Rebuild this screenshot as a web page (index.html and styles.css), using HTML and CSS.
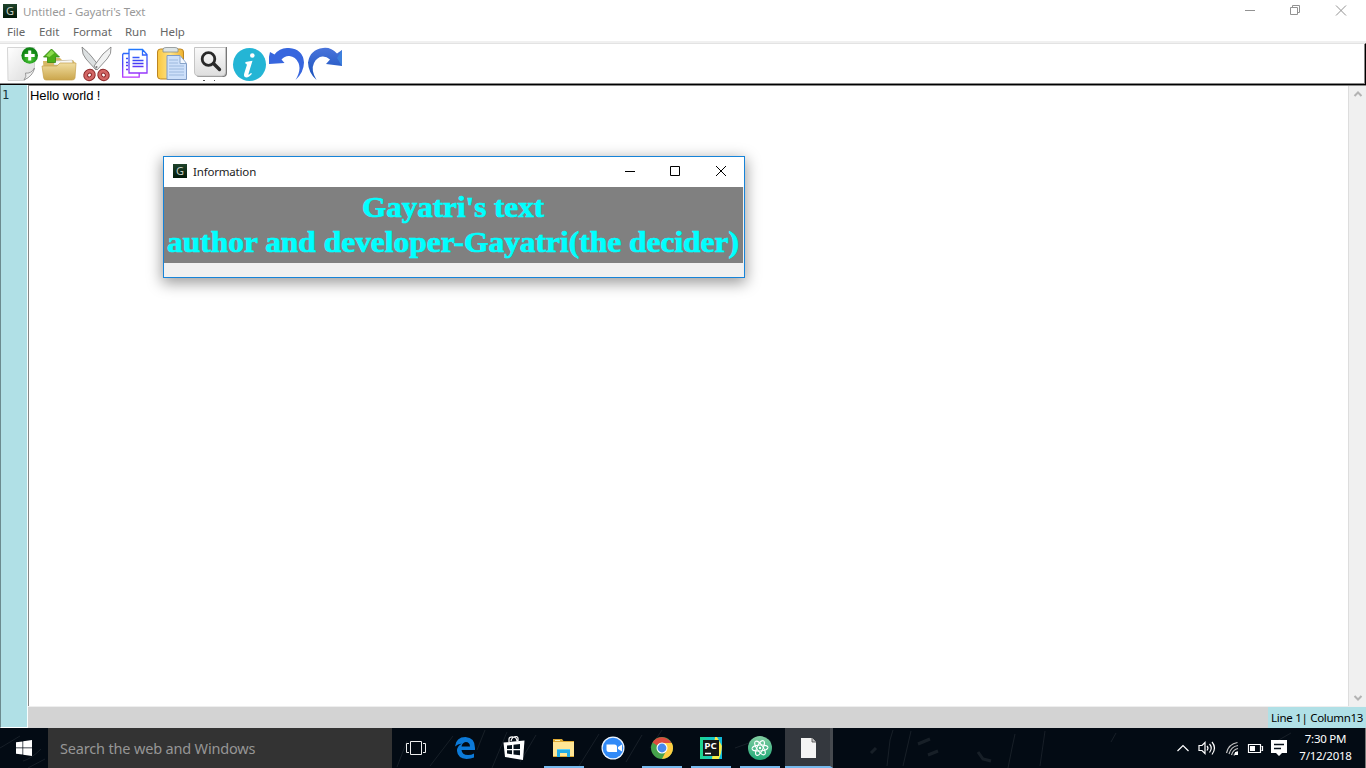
FILE: index.html
```html
<!DOCTYPE html>
<html lang="en">
<head>
<meta charset="utf-8">
<title>Untitled - Gayatri's Text</title>
<link rel="stylesheet" href="styles.css">
</head>
<body>
<div class="screen">
  <header class="titlebar">
    <span class="applogo">G</span>
    <span class="title">Untitled - Gayatri's Text</span>
    <svg class="controls" width="126" height="23" viewBox="1240 0 126 23" fill="none" stroke="#929292"><path d="M1245 10.5h10M1290.5 7.500h7v7h-7zM1292.500 7V5.500h7v7H1298M1336 5.500l10 10M1346 5.500l-10 10"/></svg>
  </header>
  <nav class="menu"><span class="file">File</span><span class="edit">Edit</span><span class="format">Format</span><span class="run">Run</span><span class="help">Help</span></nav>
  <div class="toolbar">
    <svg viewBox="3 43 38 40"><defs><linearGradient id="page" x1="0" y1="0" x2="1" y2="1"><stop stop-color="#fff"/><stop offset="1" stop-color="#dadada"/></linearGradient><radialGradient id="green" cx=".5" cy=".7"><stop stop-color="#55d238"/><stop offset="1" stop-color="#118516"/></radialGradient></defs><path d="M7.500 47.500h27V69Q30 77 24 80.500H8z" fill="url(#page)" stroke="#d5d5d5"/><path d="M24 80q3-4 1.500-7Q31 74 34.500 68 33 76 24 80z" fill="#eee" stroke="#888" stroke-width=".8"/><circle cx="29.700" cy="55.500" r="8.300" fill="url(#green)"/><path d="M29.700 50.500v10M24.700 55.500h10" stroke="#fff" stroke-width="3"/></svg>
    <svg viewBox="41 43 38 40"><defs><linearGradient id="folder" x1="0" y1="0" x2="0" y2="1"><stop stop-color="#f0dda0"/><stop offset="1" stop-color="#cba64c"/></linearGradient></defs><path d="M43 61h4l2-3h11l2 2h11l2 3v15H44z" fill="#d7b866"/><path d="M54 61l18-1 1 5H54z" fill="#f8f8f6" stroke="#bbb" stroke-width=".5"/><path d="M42 66h15l3-3h16l-1 15q-.3 2-3 2H46q-2 0-2.300-2z" fill="url(#folder)" stroke="#c5a24d" stroke-width=".7"/><path d="M51.500 49l8 8h-4v5.500h-8V57h-4z" fill="#4cae18" stroke="#338710" stroke-width=".8"/><path d="M46 56l5.500-6 3 3-5 4z" fill="#8bda4c"/></svg>
    <svg viewBox="79 43 38 40"><path d="M82 47q0 8 4 12l10 11 3-4-7-9q-3-4-10-10z" fill="#dce0e1" stroke="#777" stroke-width=".8"/><path d="M111 47q1 7-4 12L97 70l-3-4 9-12z" fill="#f1f2f2" stroke="#777" stroke-width=".8"/><g fill="none" stroke="#8d2b2c" stroke-width="4.800"><ellipse cx="89.500" cy="75" rx="4" ry="3.600" transform="rotate(-40 89.500 75)"/><ellipse cx="103.500" cy="75" rx="4" ry="3.600" transform="rotate(40 103.500 75)"/></g><g fill="none" stroke="#d26665" stroke-width="2.800"><ellipse cx="89.500" cy="75" rx="4" ry="3.600" transform="rotate(-40 89.500 75)"/><ellipse cx="103.500" cy="75" rx="4" ry="3.600" transform="rotate(40 103.500 75)"/></g><circle cx="96.500" cy="67" r="1" fill="#777"/></svg>
    <svg viewBox="117 43 38 40"><defs><linearGradient id="copy" gradientUnits="userSpaceOnUse" x1="0" y1="49" x2="0" y2="79"><stop stop-color="#217bff"/><stop offset=".5" stop-color="#493bf5"/><stop offset="1" stop-color="#ca35ff"/></linearGradient></defs><g fill="none" stroke="url(#copy)" stroke-width="1.300"><path d="M129 53.500h-5.500l-.8 1v22.700h16.500V73M129 49.500h13.500l4.500 5V73h-18zM142.500 50v5h4.500M132.500 57.500h7M132.500 60.500h11M132.500 63.500h11M132.500 66.500h11M126 58.500h2M126 62.500h2M126 65.500h2M126 69.500h2"/></g></svg>
    <svg viewBox="155 43 38 40"><defs><linearGradient id="clip"><stop stop-color="#f9c63c"/><stop offset=".5" stop-color="#ffe48a"/><stop offset="1" stop-color="#eeb12c"/></linearGradient></defs><rect x="157.500" y="49" width="26" height="30" rx="3" fill="url(#clip)" stroke="#bc8521"/><path d="M163 52v-2.500q0-2 3-2h9q3 0 3 2V52z" fill="#dce4e5" stroke="#858d8e" stroke-width=".8"/><path d="M167 55.500h13l6.500 8v16H167z" fill="#cde0fa" stroke="#7f9bc5"/><path d="M180 56v7.500h6" fill="#f3f8ff" stroke="#88a4ca"/><path d="M169 60h9M169 63h9M169 66h15M169 69h15M169 72h15M169 75h15" stroke="#91afd6" stroke-width=".8"/></svg>
    <svg viewBox="193 43 38 40"><defs><linearGradient id="key" x1="0" y1="0" x2="0" y2="1"><stop stop-color="#fafafa"/><stop offset="1" stop-color="#dedede"/></linearGradient></defs><path d="M195 47h32v26q0 4-4 4h-23q-5 0-5-5z" fill="#777"/><path d="M194.500 47.500h31v25q0 3.500-3.500 3.500h-23q-4.500 0-4.500-4z" fill="url(#key)" stroke="#c5c5c5"/><circle cx="208.500" cy="59" r="6.300" fill="none" stroke="#292929" stroke-width="2.800"/><path d="M213.500 63.500l6 6" stroke="#292929" stroke-width="3.300" stroke-linecap="round"/><path d="M203 80.500h2M214 80.500h1" stroke="#555"/></svg>
    <svg viewBox="231 43 38 40"><circle cx="249.500" cy="64.500" r="16.500" fill="#24b5d5"/><circle cx="252.300" cy="55.500" r="2.300" fill="#fff"/><path d="M245.500 62l7-1.200-4 13q-.5 2.300 2.500-.7l1 .7q-2.800 3.700-5.800 3.700-3-.4-2-4l2.600-8.300q.3-1.900-1.600-1.700z" fill="#fff"/></svg>
    <svg viewBox="269 43 38 40"><path d="M270 52l4.500 2.500Q280 47 289 48q14 1 15 14.500-.2 10-8.500 17.500 6-10 3-17-3-6.500-9-7-4.500-.5-8 3.500l3 3.500-17 1z" fill="#3766de"/></svg>
    <svg viewBox="307 43 38 40"><defs><linearGradient id="redo" x1="0" y1="0" x2="0" y2="1"><stop stop-color="#4974db"/><stop offset="1" stop-color="#1750bb"/></linearGradient></defs><path d="M342 50l-5 3.500Q331 47 323 48q-13 1.500-15 14.500.2 10 8.500 17.500-6-10-2.500-17 3-6 8.500-6.500 4-.2 7.500 3l-4 4.500 16 2z" fill="url(#redo)"/><path d="M342 50v16l-5-8z" fill="#3d80dd"/></svg>
  </div>
  <main class="editor">
    <aside class="lines">1</aside>
    <div class="content">
      <div class="textrow"><div class="document"><span>Hello world !</span></div>
        <div class="scrollbar"><svg width="16" height="16" viewBox="0 0 16 16"><path d="M4.500 10L8 6.500l3.500 3.500" fill="none" stroke="#b3b3b3" stroke-width="2"/></svg><svg width="16" height="16" viewBox="0 0 16 16"><path d="M4.500 6L8 9.500 11.500 6" fill="none" stroke="#b3b3b3" stroke-width="2"/></svg></div>
      </div>
      <footer class="status"><div class="position"><span>Line 1| Column13</span></div></footer>
    </div>
  </main>
  <footer class="taskbar">
    <svg class="wallpaper" width="1366" height="40" viewBox="0 0 1366 40"><g fill="none" stroke="#7d8387" opacity=".17"><path d="M0 20l20-12M23 33q8-2 18-12M28 40l17-9M397 39l10-26M430 38l23-30M477 22l8-20M492 40l15-36M520 34l16-27M579 38l20-32M626 34l16-27M650 20l12-18M735 20l14-5M793 16l8-5M806 35l17-8M887 38l3-26 3-10M903 38l8-35M1008 40l4-20 3-14M1040 38l5-35M1111 14l5-9M1277 13l14-8"/><path d="M871 25l5-5M918 16l12-5M928 27l10-4M978 24l5 7 8 2" stroke-width="3"/></g></svg>
    <div class="start"><svg width="16" height="16" viewBox="0 0 16 16"><path d="M0 2.300L6.500 1.400V7.500H0zM7.200 1.300L16 0v7.500H7.200zM0 8.300h6.500v6.200L0 13.700zM7.200 8.300H16V16l-8.800-1.300z" fill="#fff"/></svg></div>
    <div class="search"><span>Search the web and Windows</span></div>
    <div class="apps">
      <div class="app taskview"><svg viewBox="0 0 40 40"><path d="M14.500 13.500h11v13h-11zM13 15.500h-2.500v9H13M27 15.500h2.500v9H27" fill="none" stroke="#eee"/></svg></div>
      <div class="app edge"><svg viewBox="0 0 40 40"><path d="M10 18.500Q11 9 20.500 9 30 9.500 30 20v2H16.500q.5 5 6.500 5 3.500 0 6-1.600v4.200Q26 31 21.500 31 12.500 30 12 23q-.2-5 5-7.500-4.500.5-7 3zM16.500 18.500H25q-.2-4.500-4.200-4.500-3.700.5-4.300 4.500z" fill="#0c7ad8" fill-rule="evenodd"/></svg></div>
      <div class="app store"><svg viewBox="0 0 40 40"><path d="M15 14V11q0-2.300 4-2t4 4.500M17 13q1-4.500 5.500-4.500 2 .2 1.500 4.500" fill="none" stroke="#fff" stroke-width="1.200"/><path d="M9.500 14.500l21-2-1.500 19.500-18-3z" fill="#fff"/><path d="M13 17.500l5-.5v4h-5zM19.500 16.800l6.500-.7V21h-6.500zM13 22.300h5v4l-5-.7zM19.500 22.300H26v5l-6.500-.8z" fill="#06111a"/></svg></div>
      <div class="app explorer active"><svg viewBox="0 0 40 40"><path d="M9 11h9l1.500 2H30v16H9z" fill="#dda934"/><path d="M9 14h21v14H9z" fill="#ffe695"/><path d="M11 12.500h5" stroke="#f6f2bc"/><path d="M13 29v-8h13v8h-3v-4h-7v4z" fill="#24ace6"/><path d="M13 21h13v1H13z" fill="#5cd1f6"/></svg></div>
      <div class="app zoomapp"><svg viewBox="0 0 40 40"><circle cx="20" cy="20" r="11.500" fill="#eef6ff"/><circle cx="20" cy="20" r="10.300" fill="#318af7"/><path d="M13.500 16.500h8q2.500 0 2.500 2.500v5h-8q-2.500 0-2.500-2.500zM25 19l4-2.500v7L25 21z" fill="#fff"/></svg></div>
      <div class="app chrome active"><svg viewBox="0 0 40 40"><circle cx="20" cy="20" r="11" fill="#46a34c"/><path d="M10.500 14.400A11 11 0 0 1 29.500 15H20a5 5 0 0 0-4.500 2.800z" fill="#dd4b3e"/><path d="M20 15h9.800A11 11 0 0 1 20 31l4.300-8.500A5 5 0 0 0 20 15z" fill="#ffcd42"/><circle cx="20" cy="20" r="5.500" fill="#fff"/><circle cx="20" cy="20" r="4.400" fill="#4788ee"/></svg></div>
      <div class="app pycharm active"><svg viewBox="0 0 40 40"><defs><linearGradient id="pc"><stop stop-color="#20d789"/><stop offset=".6" stop-color="#14c5cf"/><stop offset="1" stop-color="#087cf0"/></linearGradient></defs><path d="M9 9h21l1 1v21H9z" fill="url(#pc)"/><path d="M24 9h7v7l-1 15h-9z" fill="#f9ec45"/><path d="M26 9h5v9zM28 31h3v-9z" fill="#11b9d9"/><rect x="12" y="12" width="16" height="16" fill="#171717"/><text x="13.300" y="20.800" font-size="9" font-weight="bold" fill="#fff" font-family="Open Sans, sans-serif" textLength="12.500" lengthAdjust="spacingAndGlyphs">PC</text><path d="M14 25.500h6" stroke="#fff" stroke-width="1.500"/></svg></div>
      <div class="app atom active"><svg viewBox="0 0 40 40"><defs><linearGradient id="atom" x2="0" y2="1"><stop stop-color="#82cea1"/><stop offset="1" stop-color="#20a977"/></linearGradient></defs><circle cx="20" cy="20" r="12" fill="url(#atom)"/><g fill="none" stroke="#fff" stroke-width="1"><ellipse cx="20" cy="20" rx="3" ry="8" transform="rotate(25 20 20)"/><ellipse cx="20" cy="20" rx="3" ry="8" transform="rotate(-35 20 20)"/><ellipse cx="20" cy="20" rx="3" ry="8" transform="rotate(85 20 20)"/></g><circle cx="20" cy="20" r="1.200" fill="#fff"/></svg></div>
      <div class="app doc active"><svg viewBox="0 0 40 40"><path d="M12 10h11l4 4v16H12z" fill="#f4f4f4"/><path d="M23 10v4h4" fill="#c7c7c7" stroke="#444" stroke-width=".8"/></svg></div>
    </div>
    <div class="tray"><svg width="114" height="40" viewBox="1176 728 114 40"><g fill="none" stroke="#fff" stroke-width="1.200"><path d="M1177.500 751l5.500-5.500 5.500 5.500"/><path d="M1199 745.500h3l3-3v11l-3-3h-3zM1207 746q2 2 0 4.500M1209.500 744q3.500 4 0 8.500M1212 742q5 6 0 12.500"/><g stroke="#c2c2c2"><path d="M1226.500 753q2-9 11-10.500M1229 754q2-7.500 9-8.500M1231.500 755q1.500-5.500 6.500-6.500M1234 755.500q1-3.500 4-4"/></g><path d="M1248.500 744.500h12v8h-12zM1261.500 746.500h1v4h-1"/></g><path d="M1250 746h5v5h-5zM1235 752h3v3h-3zM1271 740h16v13h-5l-3 3-3-3h-5z" fill="#fff"/><path d="M1274 744.500h10M1274 748.500h7" stroke="#07101a" stroke-width="1.300"/></svg></div>
    <div class="clock"><span class="time">7:30 PM</span><span class="date">7/12/2018</span></div>
  </footer>
  <section class="dialog">
    <header class="dialogbar"><span class="applogo">G</span><span class="caption">Information</span><svg class="controls" width="124" height="30" viewBox="620 157 124 30" fill="none" stroke="#000"><path d="M625 171.500h10M670.500 166.500h9v9h-9zM716 166l10 10M726 166l-10 10"/></svg></header>
    <div class="message"><svg width="579" height="76" viewBox="0 0 579 76"><text x="198" y="30" textLength="182" lengthAdjust="spacingAndGlyphs">Gayatri's text</text><text x="3" y="65" textLength="572" lengthAdjust="spacingAndGlyphs">author and developer-Gayatri(the decider)</text></svg></div>
  </section>
</div>
</body>
</html>
```
FILE: styles.css
```css
*{box-sizing:border-box}
body{margin:0;overflow:hidden;font-family:"Noto Sans","Open Sans",sans-serif;font-size:11.5px}
svg{display:block;flex:none}
span{white-space:nowrap}
.screen{position:relative;width:1366px;height:768px;display:flex;flex-direction:column;background:#fff}
.titlebar{height:23px;display:flex;align-items:center;padding-left:3px}
.titlebar .applogo{margin-bottom:1px}
.applogo{width:14px;height:14px;background:linear-gradient(#20442c,#001807);color:#c6cec7;font-size:11px;line-height:14px;text-align:center;flex:none}
.title{color:#999;margin-left:6px;letter-spacing:-.1px}
.controls{margin-left:auto}
.menu{height:20px;display:flex;align-items:center;border-bottom:2px solid #f0f0f0;color:#666;padding-left:7px;letter-spacing:-.05px}
.menu span{line-height:18px}
.file{width:32px}.edit{width:34px}.format{width:52px}.run{width:35px}
.toolbar{height:42px;display:flex;padding-left:3px;border-top:1px solid #e3e3e3;border-right:1px solid #000;border-bottom:1px solid #000;box-shadow:inset -1px -1px #888}
.toolbar svg{width:38px;height:40px;margin-top:-1px}
.editor{height:643px;display:flex}
.lines{width:28px;background:#b0e0e6;border-left:1px solid #6c8b8f;border-right:1px solid #f7ffff;border-bottom:1px solid #fff;padding:3px 0 0 1px;color:#17343a;font:12px/15px "DejaVu Sans Mono",monospace}
.content{width:1338px;display:flex;flex-direction:column}
.textrow{height:621px;display:flex;border-top:1px solid #888}
.document{flex:1;border-left:1px solid #888;border-right:1px solid #ddd;padding:2px 0 0 1px;color:#000;font:13px/15px "Liberation Sans",sans-serif;letter-spacing:-.09px}
.scrollbar{width:17px;background:#f0f0f0;display:flex;flex-direction:column;justify-content:space-between;padding-left:1px}
.status{height:22px;display:flex;justify-content:flex-end;background:#d3d3d3;border-top:1px solid #eee}
.position{width:98px;background:#b0e0e6;padding-left:3px;line-height:21px;color:#000;letter-spacing:-.29px}
.taskbar{height:40px;display:flex;background:#030b14;position:relative}
.wallpaper{position:absolute;left:0;top:0}
.taskbar>div{position:relative}
.start{width:48px;display:flex;align-items:center;justify-content:center}
.search{width:344px;background:#333;color:#969696;padding-left:12px;line-height:41px;font-size:14.5px;letter-spacing:-.17px}
.apps{display:flex;padding-left:4px;gap:9px}
.app{width:40px;height:40px}
.app svg{width:40px;height:40px}
.active{border-bottom:2px solid #76b9ed}
.explorer,.zoomapp,.chrome,.pycharm,.atom,.doc{transform:translateX(1px)}
.doc{width:48px;margin-left:-4px;background:#34383e;border-right:3px solid #464a4f;padding-left:4px}
.tray{margin-left:auto;width:114px}
.clock{width:76px;color:#fff;text-align:center;display:flex;flex-direction:column;padding:2px 4px 0 0;line-height:17px;letter-spacing:-.25px;border-right:1px solid #777}
.dialog{position:absolute;left:163px;top:156px;width:582px;height:122px;border:1px solid #1683d8;background:#f0f0f0;box-shadow:0 4px 14px 1px rgba(0,0,0,.4)}
.dialogbar{height:30px;background:#fff;display:flex;align-items:center;padding:0 0 2px 9px;color:#222}
.dialogbar .controls{position:relative;top:1px}
.caption{margin-left:6px;letter-spacing:-.18px}
.message{width:579px;height:76px;background:#808080}
.message text{font:bold 29px "Liberation Serif",serif;fill:#0ff;stroke:#0ff;stroke-width:.7px}
```
